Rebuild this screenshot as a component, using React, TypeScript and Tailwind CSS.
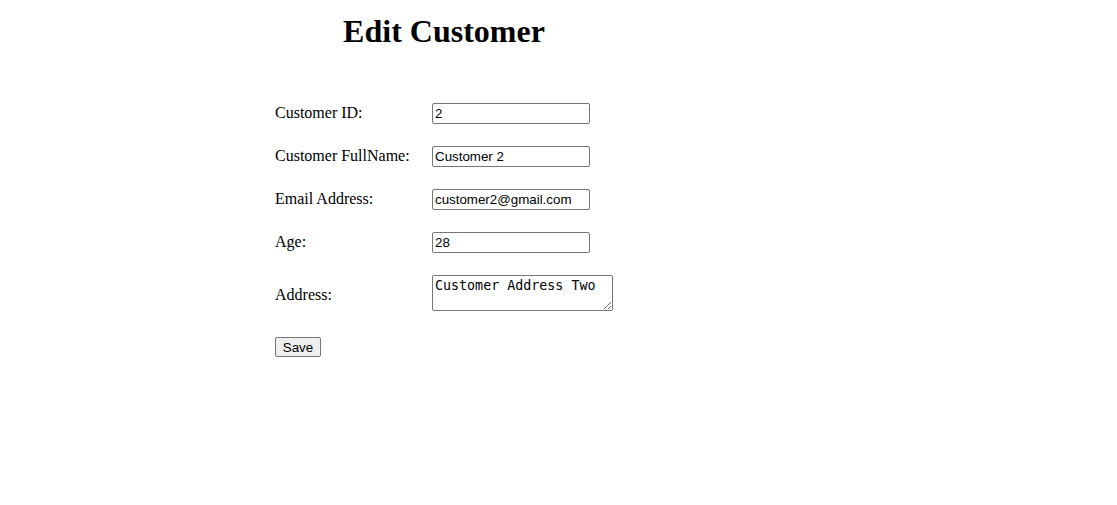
const fields = [
  { label: 'Customer ID:', value: '2' },
  { label: 'Customer FullName:', value: 'Customer 2' },
  { label: 'Email Address:', value: 'customer2@gmail.com' },
  { label: 'Age:', value: '28' },
];

const inputCls =
  "box-border h-[21px] w-[158px] rounded-[2px] border border-[#767676] bg-white px-[2px] py-[1px] font-['Liberation_Sans',Arial,sans-serif] text-[13.333px] leading-[normal] text-black";

export default function App() {
  return (
    <div className="min-h-[505px] bg-white font-['Liberation_Serif','Times_New_Roman',serif] text-black">
      <div className="ml-[263px] w-[362px]">
        <h1 className="pt-[13px] text-center text-[32px] font-bold leading-[37px]">Edit Customer</h1>
        <form
          className="mt-[53px] grid grid-cols-[157px_auto] items-center gap-y-[22px] pl-[12px]"
          onSubmit={(e) => e.preventDefault()}
        >
          {fields.map((f) => (
            <div key={f.label} className="contents">
              <label className="pb-[2px] text-[16px] leading-[normal]">{f.label}</label>
              <div className="flex h-[21px] items-center">
                <input type="text" defaultValue={f.value} className={inputCls} />
              </div>
            </div>
          ))}
          <label className="text-[16px] leading-[normal]">Address:</label>
          <div className="h-[40px]">
            <textarea
              defaultValue="Customer Address Two"
              className="box-border block h-[36px] w-[181px] rounded-[2px] border border-[#767676] bg-white p-[2px] font-['DejaVu_Sans_Mono',monospace] text-[13.333px] leading-[normal] text-black"
            />
          </div>
          <div className="col-span-2 flex h-[20px]">
            <button
              type="submit"
              className="box-border h-[20px] w-[46px] rounded-[2px] border border-[#767676] bg-[#efefef] px-[6px] py-[1px] font-['Liberation_Sans',Arial,sans-serif] text-[13.333px] leading-[normal] text-black"
            >
              Save
            </button>
          </div>
        </form>
      </div>
    </div>
  );
}
